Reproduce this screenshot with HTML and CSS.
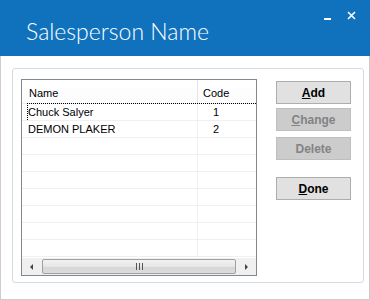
FILE: index.html
```html
<!DOCTYPE html>
<html lang="en">
<head>
  <meta charset="UTF-8">
  <title>Salesperson Name</title>
  <link rel="stylesheet" href="styles.css">
</head>
<body>
  <div class="window">
    <div class="titlebar">
      <h1 class="title">Salesperson Name</h1>
      <div class="controls">
        <span class="min"></span>
        <svg class="close" width="9" height="9" viewBox="0 0 9 9">
          <path d="M1 1 L8 8 M8 1 L1 8" stroke="#fff" stroke-width="1.6"/>
        </svg>
      </div>
    </div>

    <div class="content">
      <div class="group">
        <div class="list">
          <div class="list-head">
            <div class="col-name">Name</div>
            <div class="col-code">Code</div>
          </div>
          <div class="rows">
            <div class="row focused"><div class="col-name">Chuck Salyer</div><div class="col-code">1</div></div>
            <div class="row"><div class="col-name">DEMON PLAKER</div><div class="col-code">2</div></div>
            <div class="row"><div class="col-name"></div><div class="col-code"></div></div>
            <div class="row"><div class="col-name"></div><div class="col-code"></div></div>
            <div class="row"><div class="col-name"></div><div class="col-code"></div></div>
            <div class="row"><div class="col-name"></div><div class="col-code"></div></div>
            <div class="row"><div class="col-name"></div><div class="col-code"></div></div>
            <div class="row"><div class="col-name"></div><div class="col-code"></div></div>
            <div class="row"><div class="col-name"></div><div class="col-code"></div></div>
          </div>
          <div class="hscroll">
            <div class="arrow arrow-left"></div>
            <div class="thumb"><span class="grip"></span></div>
            <div class="arrow arrow-right"></div>
          </div>
        </div>

        <div class="buttons">
          <button class="btn"><u>A</u>dd</button>
          <button class="btn" disabled><u>C</u>hange</button>
          <button class="btn btn-delete" disabled>Delete</button>
          <button class="btn btn-done"><u>D</u>one</button>
        </div>
      </div>
    </div>
  </div>
</body>
</html>
```

FILE: styles.css
```css
* {
  margin: 0;
  padding: 0;
  box-sizing: border-box;
}

body {
  width: 370px;
  height: 300px;
  font-family: 'Liberation Sans', Arial, sans-serif;
  font-size: 11px;
  color: #000;
  background: #fff;
  overflow: hidden;
}

.window {
  width: 370px;
  height: 300px;
  display: flex;
  flex-direction: column;
}

.titlebar {
  height: 56px;
  background: #1072bd;
  display: flex;
  justify-content: space-between;
  padding-left: 26px;
}

.title {
  font-family: 'Segoe UI', Lato, 'Open Sans', sans-serif;
  font-weight: 300;
  font-size: 23px;
  color: #fff;
  line-height: 1;
  padding-top: 20px;
}

.controls {
  display: flex;
  align-items: flex-start;
  padding-top: 11px;
  padding-right: 14px;
  gap: 16px;
}

.min {
  width: 7px;
  height: 2px;
  background: #fff;
  margin-top: 7px;
}

.close {
  display: block;
}

.content {
  flex: 1;
  border: 1px solid #cdcdcd;
  border-top: none;
  padding: 12px 5px 16px 11px;
  display: flex;
}

.group {
  flex: 1;
  border: 1px solid #d3dbe3;
  border-radius: 3px;
  padding: 10px 0 0 8px;
  display: flex;
  align-items: flex-start;
  gap: 19px;
}

.list {
  width: 236px;
  height: 197px;
  border: 1px solid #828790;
  display: flex;
  flex-direction: column;
}

.list-head {
  height: 24px;
  display: flex;
  background: linear-gradient(#fff, #fcfcfc);
  border-bottom: 1px solid #f0f0f0;
}

.list-head .col-name {
  width: 176px;
  padding: 7px 0 0 7px;
  border-right: 1px solid #e5e5e5;
}

.list-head .col-code {
  flex: 1;
  padding: 7px 0 0 5px;
}

.rows {
  flex: 1;
}

.row {
  height: 17px;
  display: flex;
  border-bottom: 1px solid #f0f0f0;
}

.row .col-name {
  width: 176px;
  padding: 2px 0 0 6px;
  border-right: 1px solid #f0f0f0;
}

.row .col-code {
  flex: 1;
  padding: 2px 0 0 15px;
}

.row.focused {
  position: relative;
}

.row.focused::after {
  content: "";
  position: absolute;
  left: 5px;
  right: 0;
  top: -1px;
  bottom: 0;
  border: 1px dotted #000;
  border-bottom: none;
  border-right: none;
}

.hscroll {
  height: 17px;
  background: #f0f0f0;
  display: flex;
  align-items: center;
  padding: 0 1px;
}

.arrow {
  width: 17px;
  height: 17px;
  display: flex;
  align-items: center;
  justify-content: center;
}

.arrow-left::before {
  content: "";
  border-style: solid;
  border-width: 3px 3px 3px 0;
  border-color: transparent #444 transparent transparent;
}

.arrow-right::before {
  content: "";
  border-style: solid;
  border-width: 3px 0 3px 3px;
  border-color: transparent transparent transparent #444;
}

.thumb {
  flex: 1;
  height: 15px;
  margin: 0 2px;
  border: 1px solid #a0a0a0;
  border-radius: 2px;
  background: linear-gradient(#f2f2f2, #e6e6e6 50%, #d6d6d6 51%, #dcdcdc);
  display: flex;
  align-items: center;
  justify-content: center;
}

.grip {
  width: 7px;
  height: 7px;
  background: repeating-linear-gradient(90deg, #555 0 1px, transparent 1px 3px);
}

.buttons {
  width: 75px;
  margin-top: 2px;
  display: flex;
  flex-direction: column;
}

.btn {
  height: 23px;
  border: 1px solid #adadad;
  background: #e1e1e1;
  font-family: 'Liberation Sans', Arial, sans-serif;
  font-weight: bold;
  font-size: 12px;
  color: #000;
  margin-bottom: 4px;
}

.btn u {
  text-decoration-thickness: 1px;
}

.btn:disabled {
  background: #cccccc;
  border-color: #bfbfbf;
  color: #838383;
}

.btn-delete {
  margin-top: 2px;
}

.btn-done {
  margin-top: 13px;
}
```
